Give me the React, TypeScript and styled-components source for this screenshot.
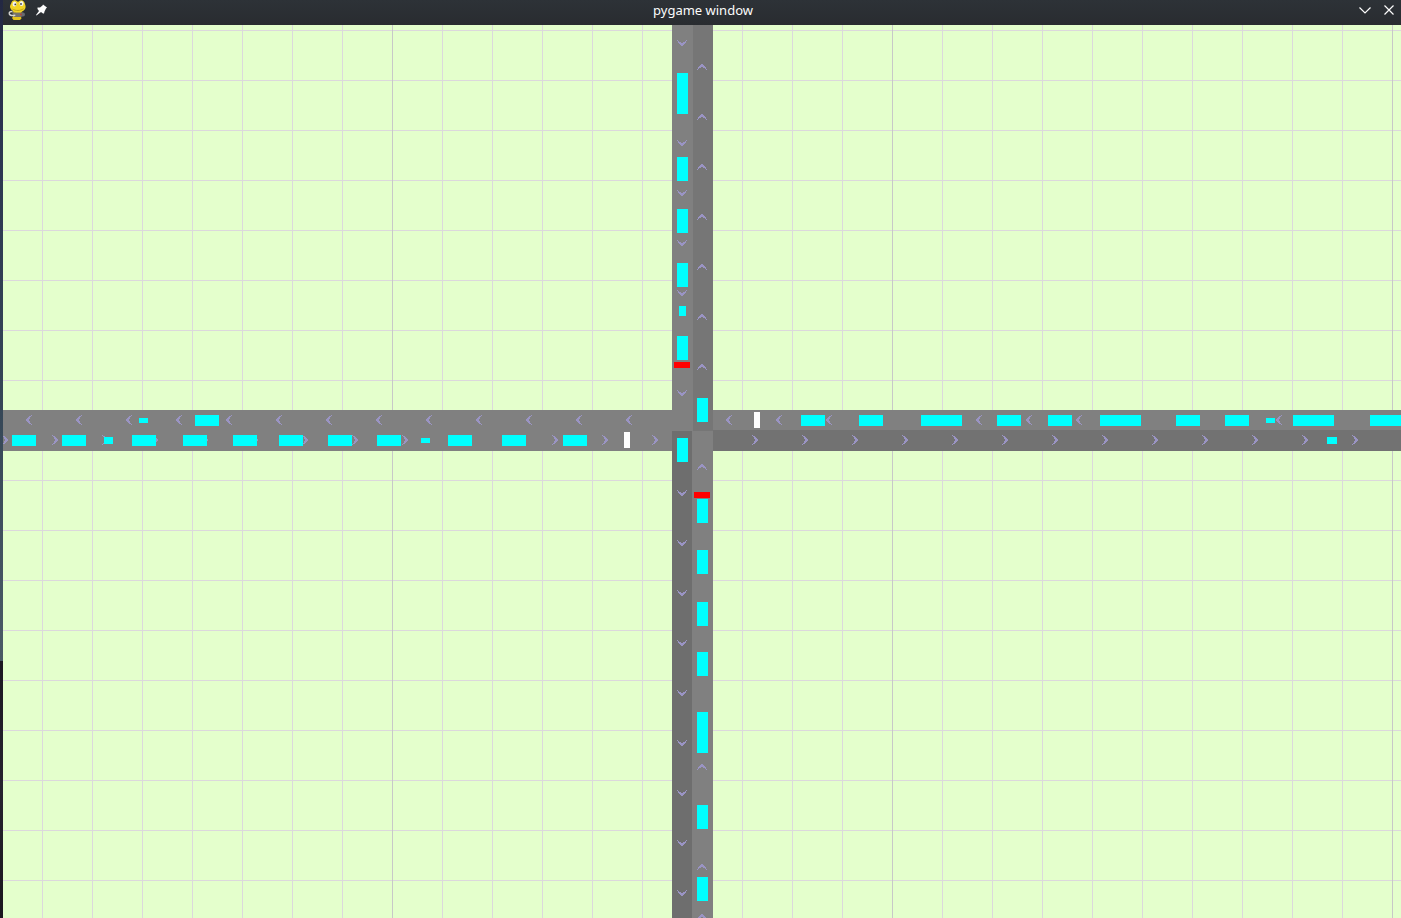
import React from "react";
import styled, { createGlobalStyle } from "styled-components";

const GlobalStyle = createGlobalStyle`
  *, *::before, *::after { box-sizing: border-box; }
  html, body, #root { height: 100%; }
  body { margin: 0; overflow: hidden; background: #1d1b24; }
`;

const Desktop = styled.div`
  display: flex;
  height: 100%;
  padding-left: 3px;
  background: linear-gradient(
    to bottom,
    #232842 0%,
    #2b3350 12%,
    #344556 42%,
    #4a5a66 72%,
    #1c1822 72%,
    #26232f 86%,
    #1b171e 100%
  );
`;

const Window = styled.main`
  display: flex;
  flex: 1;
  flex-direction: column;
  min-width: 0;
`;

const TitleBar = styled.header`
  display: grid;
  grid-template-columns: 1fr auto 1fr;
  align-items: center;
  flex: none;
  height: 25px;
  padding: 0 2px 0 4px;
  background: linear-gradient(to bottom, #2d3237, #292c30);
`;

const BarGroup = styled.div<{ $end?: boolean }>`
  display: flex;
  align-items: center;
  justify-content: ${(p) => (p.$end ? "flex-end" : "flex-start")};
  height: 25px;
  padding-bottom: 5px;
  gap: 4px;
`;

const Title = styled.h1`
  margin: 0;
  padding-bottom: 6px;
  color: #fcfcfc;
  font: 400 13px/18px "Noto Sans", sans-serif;
`;

const BarButton = styled.button`
  display: grid;
  place-items: center;
  width: 20px;
  height: 20px;
  padding: 0;
  border: 0;
  background: none;
  color: #fcfcfc;
`;

const Field = styled.section`
  flex: 1;
  min-height: 0;
  overflow: hidden;
  background: #e4ffcc;
`;

const Scene = styled.svg`
  display: block;
  width: 100%;
  height: 100%;
`;

type Heading = "left" | "right" | "down" | "up";

const LANE = "#808080";
const CAR = "#00ffff";

const range = (from: number, to: number, step = 50) =>
  Array.from({ length: Math.floor((to - from) / step) + 1 }, (_, i) => from + i * step);

const roads = [
  { x: 0, y: 410, w: 713, h: 41, fill: LANE },
  { x: 713, y: 410, w: 2000, h: 20, fill: LANE },
  { x: 713, y: 430, w: 2000, h: 21, fill: "#727272" },
  { x: 672, y: 0, w: 21, h: 431, fill: LANE },
  { x: 693, y: 0, w: 20, h: 431, fill: "#767676" },
  { x: 672, y: 431, w: 20, h: 2000, fill: "#6e6e6e" },
  { x: 692, y: 431, w: 21, h: 2000, fill: LANE },
];

// Pixel runs of a direction mark across its ten rows: distance from the tip, and length.
const runs: [from: number, length: number][] = [
  [5, 1],
  [3, 2],
  [2, 2],
  [1, 3],
  [0, 3],
  [0, 3],
  [1, 3],
  [2, 2],
  [3, 2],
  [5, 1],
];

const MARK_DEPTH = 6;

const chevron = (heading: Heading) =>
  runs
    .map(([from, length], row) => {
      const start = heading === "left" || heading === "up" ? from : MARK_DEPTH - from - length;
      return heading === "left" || heading === "right"
        ? `M${start} ${row}h${length}v1h${-length}z`
        : `M${row} ${start}h1v${length}h-1z`;
    })
    .join("");

const marks: { heading: Heading; x: number; y: number }[] = [
  ...[...range(26, 626), ...range(726, 1376)].map((x) => ({ heading: "left" as const, x, y: 415 })),
  ...[...range(2, 652), ...range(752, 1352)].map((x) => ({ heading: "right" as const, x, y: 435 })),
  ...range(40, 890).map((y) => ({ heading: "down" as const, x: 677, y })),
  ...range(64, 914).map((y) => ({ heading: "up" as const, x: 697, y })),
];

type Box = [x: number, y: number, w: number, h: number];

const cars: Box[] = [
  [139, 418, 9, 5],
  [1266, 418, 9, 5],
  ...[195, 801, 859, 997, 1048, 1176, 1225].map((x): Box => [x, 415, 24, 11]),
  ...[921, 1100, 1293, 1370].map((x): Box => [x, 415, 41, 11]),
  [104, 437, 9, 7],
  [421, 438, 9, 5],
  [1327, 437, 10, 7],
  ...[12, 62, 132, 183, 233, 279, 328, 377, 448, 502, 563].map((x): Box => [x, 435, 24, 11]),
  [677, 73, 11, 41],
  [679, 306, 7, 10],
  ...[157, 209, 263, 336, 438].map((y): Box => [677, y, 11, 24]),
  [697, 712, 11, 41],
  ...[398, 499, 550, 602, 652, 805, 877].map((y): Box => [697, y, 11, 24]),
];

const signals: { box: Box; fill: string }[] = [
  { box: [674, 362, 16, 6], fill: "#ff0000" },
  { box: [694, 492, 16, 6], fill: "#ff0000" },
  { box: [754, 412, 6, 16], fill: "#ffffff" },
  { box: [624, 432, 6, 16], fill: "#ffffff" },
];

const Rect = ({ box: [x, y, width, height], fill }: { box: Box; fill: string }) => (
  <rect x={x} y={y} width={width} height={height} fill={fill} />
);

const SnakeLogo = () => (
  <svg width="18" height="20" viewBox="0 0 18 20" aria-hidden="true">
    <path d="M5 11h9l-1.500 4 1 3.500-1.500 1.500H5.500L4 18 6 15z" fill="#e3c21c" />
    <path d="M4 12.500h11l1 3-3 1.500H6z" fill="#77736a" />
    <path d="M2 7C1.800 5.500 3 4 3.500 2.500 4.200.8 5.500 0 7 .2c1.300.2 2 1.500 3 1.500S11.500.3 13 .2C15 .1 16.500 1.600 16.800 3.500c.8 1.800 1.200 4 .2 5.500-1.500 2.500-4.500 3.500-7.700 3.300C6 12.200 2.500 10 2 7z" fill="#f0d424" />
    <ellipse cx="6.500" cy="4" rx="2" ry="2.600" fill="#f3f3ee" />
    <ellipse cx="13.500" cy="3.600" rx="2" ry="2.500" fill="#f3f3ee" />
    <circle cx="7.300" cy="4.400" r="0.900" fill="#3d4250" />
    <circle cx="13" cy="4" r="0.900" fill="#3d4250" />
    <path d="M4.500 9c3 2 8 2 11-.3" fill="none" stroke="#b39512" strokeWidth="0.800" />
    <path d="M4.500 11.800c-2-.6-3.500.3-3.200 1.900.4 1.600 3 2 6 1.500" fill="none" stroke="#d6d6d2" strokeWidth="1.500" />
    <circle cx="15" cy="14.500" r="2" fill="#666a70" />
    <circle cx="13" cy="14.500" r="1" fill="#b0453a" />
  </svg>
);

const PinIcon = () => (
  <svg width="12" height="12" viewBox="0 0 12 12" aria-hidden="true">
    <path d="M8 0.500 L12 3.500 L11 4.500 L9.500 7.500 L9 9.500 L8 9.500 L6 8 L1.500 11.500 L1 11 L4 7 L2.500 5 L2.500 3.500 L5 3.500 L7.500 1.500 Z" fill="currentColor" />
  </svg>
);

export default function App() {
  return (
    <>
      <GlobalStyle />
      <Desktop>
        <Window>
          <TitleBar>
            <BarGroup>
              <BarButton type="button" aria-label="Window menu">
                <SnakeLogo />
              </BarButton>
              <BarButton type="button" aria-label="Keep on all desktops">
                <PinIcon />
              </BarButton>
            </BarGroup>
            <Title>pygame window</Title>
            <BarGroup $end>
              <BarButton type="button" aria-label="Minimize">
                <svg width="12" height="12" viewBox="0 0 12 12" aria-hidden="true">
                  <path d="M0.500 3.500 L6 9 L11.500 3.500" fill="none" stroke="currentColor" strokeWidth="1.200" />
                </svg>
              </BarButton>
              <BarButton type="button" aria-label="Close">
                <svg width="12" height="12" viewBox="0 0 12 12" aria-hidden="true">
                  <path d="M1.500 1.500 L10.500 10.500 M10.500 1.500 L1.500 10.500" stroke="currentColor" strokeWidth="1.200" />
                </svg>
              </BarButton>
            </BarGroup>
          </TitleBar>
          <Field aria-label="Traffic simulation">
            <Scene role="img" aria-label="Two roads crossing with cars and traffic signals">
              <defs>
                <pattern id="minor" x="42" y="30" width="50" height="50" patternUnits="userSpaceOnUse">
                  <path d="M0 0h50v1H1v49H0z" fill="#dcd8dc" />
                </pattern>
                <pattern id="major" x="392" y="0" width="500" height="500" patternUnits="userSpaceOnUse">
                  <rect width="1" height="500" fill="#c8c8c8" />
                </pattern>
              </defs>
              <g transform="translate(-3 -25)" shapeRendering="crispEdges">
                <rect width="4000" height="3000" fill="url(#minor)" />
                <rect width="4000" height="3000" fill="url(#major)" />
                {roads.map((r, i) => (
                  <Rect key={i} box={[r.x, r.y, r.w, r.h]} fill={r.fill} />
                ))}
                {marks.map((m, i) => (
                  <path
                    key={i}
                    d={chevron(m.heading)}
                    transform={`translate(${m.x} ${m.y})`}
                    fill="#9a94c4"
                  />
                ))}
                {cars.map((box, i) => (
                  <Rect key={i} box={box} fill={CAR} />
                ))}
                {signals.map((s, i) => (
                  <Rect key={i} box={s.box} fill={s.fill} />
                ))}
              </g>
            </Scene>
          </Field>
        </Window>
      </Desktop>
    </>
  );
}
